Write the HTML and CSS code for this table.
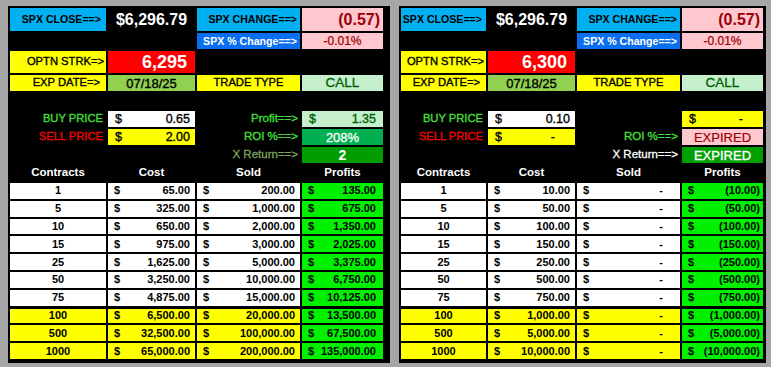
FILE: index.html
```html
<!DOCTYPE html>
<html>
<head>
<meta charset="utf-8">
<link rel="stylesheet" href="styles.css">
</head>
<body>
<div class="sheet">
  <div class="panel panel-a">
    <div class="c lbl cyan pr5">SPX CLOSE==&gt;</div>
    <div class="c close">$6,296.79</div>
    <div class="c lbl cyan pr3">SPX CHANGE==&gt;</div>
    <div class="c chg pink">(0.57)</div>
    <div class="span2"></div>
    <div class="c lbl blue pr3">SPX % Change==&gt;</div>
    <div class="c pct pink">-0.01%</div>
    <div class="c lbl2 yellow pr2">OPTN STRK=&gt;</div>
    <div class="c strk">6,295</div>
    <div class="span2"></div>
    <div class="c lbl2 yellow pr6">EXP DATE=&gt;</div>
    <div class="c date">07/18/25</div>
    <div class="c lbl2 yellow mid">TRADE TYPE</div>
    <div class="c call">CALL</div>
    <div class="span4"></div>

    <div class="c side lime">BUY PRICE</div>
    <div class="c acct white"><span>$</span><span>0.65</span></div>
    <div class="c side2 lime">Profit==&gt;</div>
    <div class="c acct mint pr7"><span>$</span><span>1.35</span></div>

    <div class="c side red-t">SELL PRICE</div>
    <div class="c acct yellow"><span>$</span><span>2.00</span></div>
    <div class="c side2 lime">ROI %==&gt;</div>
    <div class="c roi">208%</div>

    <div class="span2"></div>
    <div class="c side2 olive">X Return==&gt;</div>
    <div class="c xret">2</div>

    <div class="c hdr">Contracts</div>
    <div class="c hdr">Cost</div>
    <div class="c hdr">Sold</div>
    <div class="c hdr">Profits</div>

    <div class="c d n">1</div><div class="c d a"><span>$</span><span>65.00</span></div><div class="c d a"><span>$</span><span>200.00</span></div><div class="c d a g"><span>$</span><span>135.00</span></div>
    <div class="c d n">5</div><div class="c d a"><span>$</span><span>325.00</span></div><div class="c d a"><span>$</span><span>1,000.00</span></div><div class="c d a g"><span>$</span><span>675.00</span></div>
    <div class="c d n">10</div><div class="c d a"><span>$</span><span>650.00</span></div><div class="c d a"><span>$</span><span>2,000.00</span></div><div class="c d a g"><span>$</span><span>1,350.00</span></div>
    <div class="c d n">15</div><div class="c d a"><span>$</span><span>975.00</span></div><div class="c d a"><span>$</span><span>3,000.00</span></div><div class="c d a g"><span>$</span><span>2,025.00</span></div>
    <div class="c d n">25</div><div class="c d a"><span>$</span><span>1,625.00</span></div><div class="c d a"><span>$</span><span>5,000.00</span></div><div class="c d a g"><span>$</span><span>3,375.00</span></div>
    <div class="c d n">50</div><div class="c d a"><span>$</span><span>3,250.00</span></div><div class="c d a"><span>$</span><span>10,000.00</span></div><div class="c d a g"><span>$</span><span>6,750.00</span></div>
    <div class="c d n">75</div><div class="c d a"><span>$</span><span>4,875.00</span></div><div class="c d a"><span>$</span><span>15,000.00</span></div><div class="c d a g"><span>$</span><span>10,125.00</span></div>
    <div class="c d n y t3">100</div><div class="c d a y t3"><span>$</span><span>6,500.00</span></div><div class="c d a y t3"><span>$</span><span>20,000.00</span></div><div class="c d a g t3"><span>$</span><span>13,500.00</span></div>
    <div class="c d n y">500</div><div class="c d a y"><span>$</span><span>32,500.00</span></div><div class="c d a y"><span>$</span><span>100,000.00</span></div><div class="c d a g"><span>$</span><span>67,500.00</span></div>
    <div class="c d n y">1000</div><div class="c d a y"><span>$</span><span>65,000.00</span></div><div class="c d a y"><span>$</span><span>200,000.00</span></div><div class="c d a g"><span>$</span><span>135,000.00</span></div>
  </div>

  <div class="panel panel-b">
    <div class="c lbl cyan pr4">SPX CLOSE==&gt;</div>
    <div class="c close">$6,296.79</div>
    <div class="c lbl cyan pr3">SPX CHANGE==&gt;</div>
    <div class="c chg pink">(0.57)</div>
    <div class="span2"></div>
    <div class="c lbl blue pr3">SPX % Change==&gt;</div>
    <div class="c pct pink">-0.01%</div>
    <div class="c lbl2 yellow pr2">OPTN STRK=&gt;</div>
    <div class="c strk">6,300</div>
    <div class="span2"></div>
    <div class="c lbl2 yellow pr6">EXP DATE=&gt;</div>
    <div class="c date">07/18/25</div>
    <div class="c lbl2 yellow mid">TRADE TYPE</div>
    <div class="c call">CALL</div>
    <div class="span4"></div>

    <div class="c side lime">BUY PRICE</div>
    <div class="c acct white"><span>$</span><span>0.10</span></div>
    <div></div>
    <div class="c acct yellow dash"><span>$</span><span>-</span></div>

    <div class="c side red-t">SELL PRICE</div>
    <div class="c acct yellow dash"><span>$</span><span>-</span></div>
    <div class="c side2 lime">ROI %==&gt;</div>
    <div class="c exp-pink">EXPIRED</div>

    <div class="span2"></div>
    <div class="c side2 white-t">X Return==&gt;</div>
    <div class="c exp-green">EXPIRED</div>

    <div class="c hdr">Contracts</div>
    <div class="c hdr">Cost</div>
    <div class="c hdr">Sold</div>
    <div class="c hdr">Profits</div>

    <div class="c d n">1</div><div class="c d a"><span>$</span><span>10.00</span></div><div class="c d a ds"><span>$</span><span>-</span></div><div class="c d a g neg"><span>$</span><span>(10.00)</span></div>
    <div class="c d n">5</div><div class="c d a"><span>$</span><span>50.00</span></div><div class="c d a ds"><span>$</span><span>-</span></div><div class="c d a g neg"><span>$</span><span>(50.00)</span></div>
    <div class="c d n">10</div><div class="c d a"><span>$</span><span>100.00</span></div><div class="c d a ds"><span>$</span><span>-</span></div><div class="c d a g neg"><span>$</span><span>(100.00)</span></div>
    <div class="c d n">15</div><div class="c d a"><span>$</span><span>150.00</span></div><div class="c d a ds"><span>$</span><span>-</span></div><div class="c d a g neg"><span>$</span><span>(150.00)</span></div>
    <div class="c d n">25</div><div class="c d a"><span>$</span><span>250.00</span></div><div class="c d a ds"><span>$</span><span>-</span></div><div class="c d a g neg"><span>$</span><span>(250.00)</span></div>
    <div class="c d n">50</div><div class="c d a"><span>$</span><span>500.00</span></div><div class="c d a ds"><span>$</span><span>-</span></div><div class="c d a g neg"><span>$</span><span>(500.00)</span></div>
    <div class="c d n">75</div><div class="c d a"><span>$</span><span>750.00</span></div><div class="c d a ds"><span>$</span><span>-</span></div><div class="c d a g neg"><span>$</span><span>(750.00)</span></div>
    <div class="c d n y t3">100</div><div class="c d a y t3"><span>$</span><span>1,000.00</span></div><div class="c d a y ds t3"><span>$</span><span>-</span></div><div class="c d a g neg t3"><span>$</span><span>(1,000.00)</span></div>
    <div class="c d n y">500</div><div class="c d a y"><span>$</span><span>5,000.00</span></div><div class="c d a y ds"><span>$</span><span>-</span></div><div class="c d a g neg"><span>$</span><span>(5,000.00)</span></div>
    <div class="c d n y">1000</div><div class="c d a y"><span>$</span><span>10,000.00</span></div><div class="c d a y ds"><span>$</span><span>-</span></div><div class="c d a g neg"><span>$</span><span>(10,000.00)</span></div>
  </div>
</div>
</body>
</html>
```

FILE: styles.css
```css
* { box-sizing: border-box; }
html, body { margin: 0; padding: 0; }
body {
  background: #a6a6a6;
  width: 771px;
  height: 367px;
  overflow: hidden;
  font-family: "Liberation Sans", Arial, sans-serif;
  color: #000;
}
.sheet {
  display: flex;
  align-items: flex-start;
  gap: 9px;
  padding: 6px 0 0 8px;
}
.panel {
  background: #000;
  display: grid;
  gap: 2px;
  padding: 2px 7px 4px 2px;
  grid-template-rows: 23px 16px 22px 16px 16px 16px 16px 16px 16px repeat(10, 15.8px);
}
.panel-a { grid-template-columns: 96px 87px 103px 81px; }
.panel-b { grid-template-columns: 85px 87px 103px 81px; padding-right: 3px; }

.span2 { grid-column: span 2; }
.span4 { grid-column: 1 / -1; }

.c {
  display: flex;
  align-items: center;
  line-height: 1;
  white-space: nowrap;
  overflow: hidden;
}
.mid { justify-content: center; }

.cyan { background: #00b0f0; }
.blue { background: #0a6ef0; color: #fff; }
.pink { background: #ffc7ce; color: #9c0006; }
.yellow { background: #ffff00; }
.white { background: #fff; }
.mint { background: #c6efce; color: #006100; }

.lbl {
  font-weight: bold;
  font-size: 10.6px;
  justify-content: flex-end;
}
.lbl2 {
  font-size: 11.2px;
  justify-content: flex-end;
  -webkit-text-stroke: 0.35px currentColor;
}
.lbl2.mid { justify-content: center; }
.pr2 { padding-right: 2px; }
.pr3 { padding-right: 3px; }
.pr4 { padding-right: 4px; }
.pr5 { padding-right: 5px; }
.pr6 { padding-right: 6px; }
.pr7 { padding-right: 7px !important; }

.close {
  color: #fff;
  font-weight: bold;
  font-size: 16px;
  justify-content: center;
}
.chg {
  font-weight: bold;
  font-size: 16px;
  justify-content: flex-end;
  padding-right: 3px;
}
.pct {
  font-size: 12px;
  justify-content: center;
  -webkit-text-stroke: 0.2px currentColor;
}
.strk {
  background: #ff0000;
  color: #fff;
  font-weight: bold;
  font-size: 18px;
  justify-content: flex-end;
  padding-right: 8px;
}
.date {
  background: #92d050;
  font-size: 13px;
  justify-content: center;
  -webkit-text-stroke: 0.35px currentColor;
}
.call {
  background: #c6efce;
  color: #006100;
  font-size: 13.5px;
  justify-content: center;
  -webkit-text-stroke: 0.3px currentColor;
}

.side {
  font-size: 11.2px;
  justify-content: flex-end;
  padding-right: 3px;
  -webkit-text-stroke: 0.3px currentColor;
}
.side2 {
  font-size: 11.5px;
  justify-content: flex-end;
  padding-right: 2px;
  -webkit-text-stroke: 0.3px currentColor;
}
.lime { color: #44e03a; }
.red-t { color: #ff0000; }
.olive { color: #7ea35c; }
.white-t { color: #fff; }

.acct {
  justify-content: space-between;
  font-size: 12.5px;
  padding: 0 5px 0 7px;
  -webkit-text-stroke: 0.35px currentColor;
}
.acct.dash { padding-right: 20px; }

.roi {
  background: #00b050;
  color: #fff;
  font-size: 13px;
  justify-content: center;
  -webkit-text-stroke: 0.3px currentColor;
}
.xret {
  background: #009c00;
  color: #fff;
  font-size: 14px;
  font-weight: bold;
  justify-content: center;
}
.exp-pink {
  background: #ffc7ce;
  color: #9c0006;
  font-size: 13px;
  justify-content: center;
  -webkit-text-stroke: 0.2px currentColor;
}
.exp-green {
  background: #00a000;
  color: #fff;
  font-size: 13px;
  justify-content: center;
  -webkit-text-stroke: 0.35px currentColor;
}

.hdr {
  color: #fff;
  font-weight: bold;
  font-size: 11.5px;
  justify-content: center;
}

.d {
  background: #fff;
  font-weight: bold;
  font-size: 11px;
}
.n { justify-content: center; }
.a {
  justify-content: space-between;
  padding: 0 5px 0 6px;
}
.a.g { padding-right: 7px; }
.a.g.neg { padding-right: 3px; }
.a.ds { padding-right: 17px; }
.y { background: #ffff00; }
.g { background: #00f000; }
.t3 { box-shadow: inset 0 1px 0 #000; }
```
